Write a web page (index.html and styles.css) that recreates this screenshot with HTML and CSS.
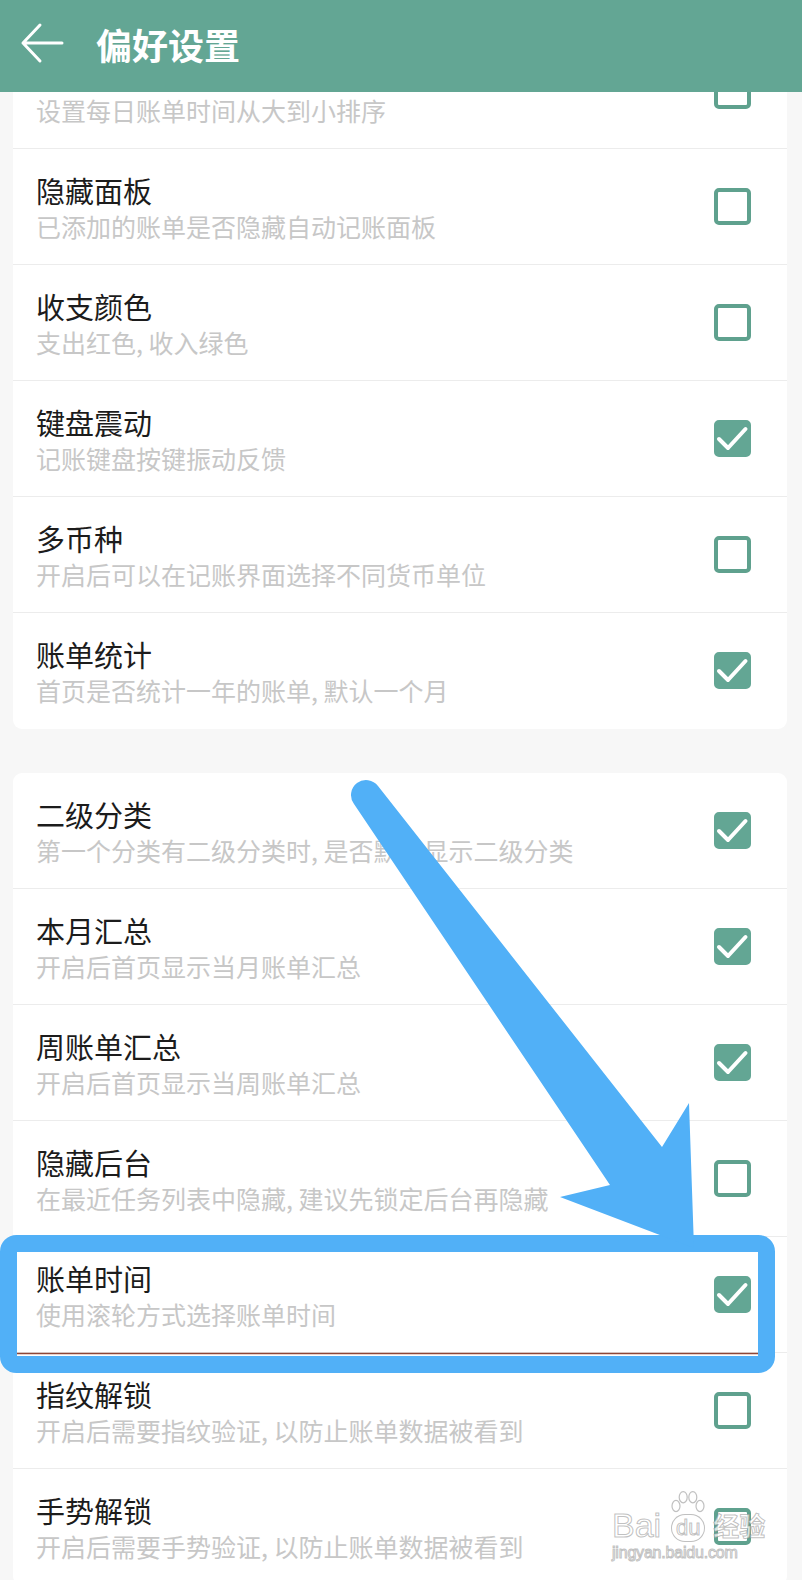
FILE: index.html
```html
<!DOCTYPE html>
<html lang="zh-CN">
<head>
<meta charset="utf-8">
<title>偏好设置</title>
<link rel="stylesheet" href="styles.css">
</head>
<body>
<header class="appbar">
  <svg class="back" width="44" height="44" viewBox="0 0 44 44"><path d="M42 22 H3 M20 4 L3 22 L20 40" fill="none" stroke="#fff" stroke-width="3" stroke-linecap="round" stroke-linejoin="round"/></svg>
  <h1 class="title">偏好设置</h1>
</header>

<main class="content">
  <section class="card card-first">
    <div class="row">
      <div class="text"><div class="label"></div><div class="desc">设置每日账单时间从大到小排序</div></div>
      <span class="cb"></span>
    </div>
    <div class="row">
      <div class="text"><div class="label">隐藏面板</div><div class="desc">已添加的账单是否隐藏自动记账面板</div></div>
      <span class="cb"></span>
    </div>
    <div class="row">
      <div class="text"><div class="label">收支颜色</div><div class="desc">支出红色, 收入绿色</div></div>
      <span class="cb"></span>
    </div>
    <div class="row">
      <div class="text"><div class="label">键盘震动</div><div class="desc">记账键盘按键振动反馈</div></div>
      <span class="cb on"><svg viewBox="0 0 37 37"><path d="M5 19 L14 28 L31.5 9" /></svg></span>
    </div>
    <div class="row">
      <div class="text"><div class="label">多币种</div><div class="desc">开启后可以在记账界面选择不同货币单位</div></div>
      <span class="cb"></span>
    </div>
    <div class="row">
      <div class="text"><div class="label">账单统计</div><div class="desc">首页是否统计一年的账单, 默认一个月</div></div>
      <span class="cb on"><svg viewBox="0 0 37 37"><path d="M5 19 L14 28 L31.5 9" /></svg></span>
    </div>
  </section>

  <section class="card">
    <div class="row">
      <div class="text"><div class="label">二级分类</div><div class="desc">第一个分类有二级分类时, 是否默认显示二级分类</div></div>
      <span class="cb on"><svg viewBox="0 0 37 37"><path d="M5 19 L14 28 L31.5 9" /></svg></span>
    </div>
    <div class="row">
      <div class="text"><div class="label">本月汇总</div><div class="desc">开启后首页显示当月账单汇总</div></div>
      <span class="cb on"><svg viewBox="0 0 37 37"><path d="M5 19 L14 28 L31.5 9" /></svg></span>
    </div>
    <div class="row">
      <div class="text"><div class="label">周账单汇总</div><div class="desc">开启后首页显示当周账单汇总</div></div>
      <span class="cb on"><svg viewBox="0 0 37 37"><path d="M5 19 L14 28 L31.5 9" /></svg></span>
    </div>
    <div class="row">
      <div class="text"><div class="label">隐藏后台</div><div class="desc">在最近任务列表中隐藏, 建议先锁定后台再隐藏</div></div>
      <span class="cb"></span>
    </div>
    <div class="row">
      <div class="text"><div class="label">账单时间</div><div class="desc">使用滚轮方式选择账单时间</div></div>
      <span class="cb on"><svg viewBox="0 0 37 37"><path d="M5 19 L14 28 L31.5 9" /></svg></span>
    </div>
    <div class="row">
      <div class="text"><div class="label">指纹解锁</div><div class="desc">开启后需要指纹验证, 以防止账单数据被看到</div></div>
      <span class="cb"></span>
    </div>
    <div class="row">
      <div class="text"><div class="label">手势解锁</div><div class="desc">开启后需要手势验证, 以防止账单数据被看到</div></div>
      <span class="cb"></span>
    </div>
  </section>
</main>

<svg class="annot" width="802" height="1580" viewBox="0 0 802 1580">
  <line x1="16" y1="1353.5" x2="758" y2="1353.5" stroke="#8f4636" stroke-width="1.6"/>
  <rect x="8.5" y="1243.5" width="758" height="121" rx="8" fill="none" stroke="#51b0f7" stroke-width="17"/>
  <path d="M378 786 L662 1147 L689 1103 L694 1248 L560 1197 L610 1185 L354 804 A15 15 0 0 1 378 786 Z" fill="#51b0f7"/>
</svg>

<div class="watermark">
  <div class="wm-main">
    <span class="wm-bai">Bai</span>
    <span class="wm-du">
      <svg class="wm-paw" width="40" height="24" viewBox="0 0 50 30">
        <ellipse cx="10" cy="20" rx="5" ry="7"/>
        <ellipse cx="19" cy="9" rx="5" ry="7"/>
        <ellipse cx="31" cy="9" rx="5" ry="7"/>
        <ellipse cx="40" cy="20" rx="5" ry="7"/>
      </svg>
      <span class="wm-du-text">du</span>
    </span>
    <span class="wm-jy">经验</span>
  </div>
  <div class="wm-url">jingyan.baidu.com</div>
</div>
</body>
</html>
```

FILE: styles.css
```css
html, body {
  margin: 0;
  padding: 0;
}

body {
  width: 802px;
  height: 1580px;
  overflow: hidden;
  position: relative;
  background: #f7f7f7;
  font-family: "Noto Sans CJK SC", "Noto Sans", sans-serif;
}

.appbar {
  position: fixed;
  top: 0;
  left: 0;
  right: 0;
  height: 92px;
  background: #63a694;
  display: flex;
  align-items: center;
  z-index: 10;
}

.back {
  margin-left: 20px;
  margin-top: -6px;
  flex: none;
}

.title {
  margin: -4px 0 0 32px;
  color: #fff;
  font-size: 36px;
  font-weight: 700;
  line-height: 44px;
  letter-spacing: 0;
}

.content {
  padding: 33px 15px 0 13px;
  display: flex;
  flex-direction: column;
  gap: 44px;
}

.card {
  background: #fff;
  border-radius: 9px;
  padding-bottom: 1px;
}

.row {
  height: 115px;
  border-bottom: 1px solid #ececec;
  display: flex;
  align-items: center;
  padding: 0 36px 0 23px;
}

.row:last-child {
  border-bottom: none;
}

.text {
  flex: 1;
  min-width: 0;
  margin-top: 1px;
}

.label {
  font-size: 29px;
  line-height: 36px;
  height: 36px;
  color: #1c1c1c;
}

.desc {
  margin-top: 2px;
  font-size: 25px;
  line-height: 32px;
  color: #c7c7c7;
  white-space: nowrap;
}

.cb {
  flex: none;
  width: 37px;
  height: 37px;
  box-sizing: border-box;
  border: 4px solid #5fa18e;
  border-radius: 5px;
  position: relative;
}

.cb.on {
  background: #63a694;
  border-color: #63a694;
}

.cb svg {
  position: absolute;
  left: -4px;
  top: -4px;
  width: 37px;
  height: 37px;
}

.cb svg path {
  fill: none;
  stroke: #fff;
  stroke-width: 4;
  stroke-linecap: round;
  stroke-linejoin: round;
}

.annot {
  position: absolute;
  top: 0;
  left: 0;
  z-index: 5;
  pointer-events: none;
}

.watermark {
  position: absolute;
  left: 612px;
  top: 1488px;
  z-index: 6;
  white-space: nowrap;
  color: rgba(255, 255, 255, 0.75);
  -webkit-text-stroke: 1px rgba(140, 140, 140, 0.55);
  font-family: "Liberation Sans", Arial, sans-serif;
}

.wm-main {
  display: flex;
  align-items: flex-end;
  height: 54px;
}

.wm-bai {
  font-size: 34px;
  line-height: 34px;
  font-weight: 400;
}

.wm-du {
  display: flex;
  flex-direction: column;
  align-items: center;
  margin-left: 4px;
  width: 46px;
}

.wm-paw {
  fill: rgba(255, 255, 255, 0.75);
  stroke: rgba(140, 140, 140, 0.55);
  stroke-width: 1.5;
}

.wm-du-text {
  font-size: 22px;
  line-height: 26px;
  border: 1.5px solid rgba(140, 140, 140, 0.55);
  border-radius: 14px;
  padding: 0 4px;
  background: rgba(255, 255, 255, 0.5);
}

.wm-jy {
  font-family: "Noto Sans CJK SC", sans-serif;
  font-size: 26px;
  line-height: 34px;
  font-weight: 700;
  margin-left: 2px;
}

.wm-url {
  font-size: 16px;
  line-height: 20px;
  letter-spacing: -0.2px;
  margin-top: 1px;
}
```
